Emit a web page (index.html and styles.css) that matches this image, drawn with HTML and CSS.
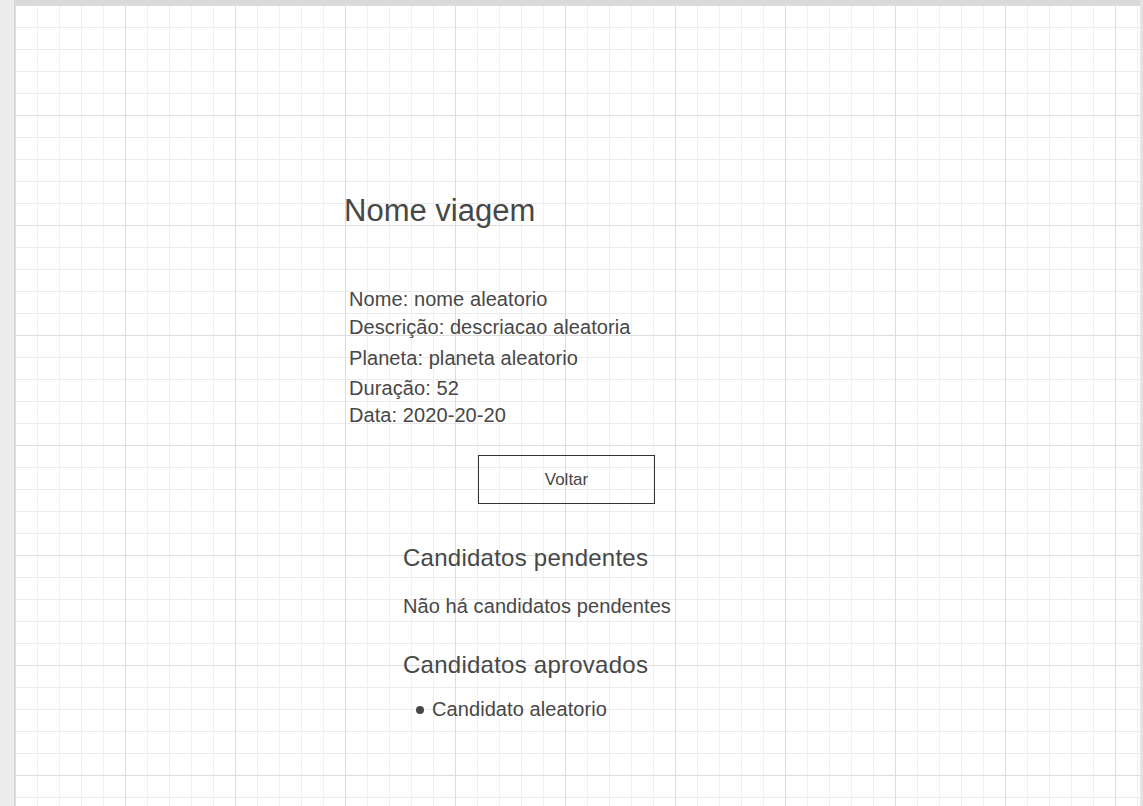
FILE: index.html
```html
<!DOCTYPE html>
<html lang="pt">
<head>
<meta charset="utf-8">
<title>Nome viagem</title>
<link rel="stylesheet" href="styles.css">
</head>
<body>
<div class="app">
  <div class="sidebar"></div>
  <div class="main">
    <div class="topbar"></div>
    <div class="canvas">
      <div class="page">
        <h1 class="title">Nome viagem</h1>
        <div class="details">
          <p class="detail">Nome: nome aleatorio</p>
          <p class="detail d2">Descrição: descriacao aleatoria</p>
          <p class="detail d3">Planeta: planeta aleatorio</p>
          <p class="detail d4">Duração: 52</p>
          <p class="detail d5">Data: 2020-20-20</p>
        </div>
        <button class="btn" type="button">Voltar</button>
        <section class="candidates">
          <h2 class="section-title">Candidatos pendentes</h2>
          <p class="empty">Não há candidatos pendentes</p>
          <h2 class="section-title approved">Candidatos aprovados</h2>
          <ul class="list">
            <li class="list-item">Candidato aleatorio</li>
          </ul>
        </section>
      </div>
    </div>
  </div>
  <div class="rightbar"></div>
</div>
</body>
</html>
```
FILE: styles.css
```css
* { box-sizing: border-box; }
html, body { margin: 0; padding: 0; }
body {
  width: 1143px;
  height: 806px;
  overflow: hidden;
  font-family: "Liberation Sans", Arial, sans-serif;
  color: #474747;
  background: #ffffff;
}
.app {
  display: flex;
  width: 1143px;
  height: 806px;
}
.sidebar {
  width: 15px;
  flex: none;
  background: #ececec;
  border-right: 1px solid #d6d6d6;
}
.main {
  flex: 1;
  display: flex;
  flex-direction: column;
  min-width: 0;
}
.topbar {
  height: 5px;
  flex: none;
  background: #dadada;
}
.canvas {
  flex: 1;
  background-color: #ffffff;
  background-image:
    linear-gradient(to right, #dddddd 1px, transparent 1px),
    linear-gradient(to bottom, #dddddd 1px, transparent 1px),
    linear-gradient(to right, #f0f0f0 1px, transparent 1px),
    linear-gradient(to bottom, #ebebeb 1px, transparent 1px);
  background-size: 110px 110px, 110px 110px, 22px 22px, 22px 22px;
  background-position: 0 0;
}
.rightbar {
  width: 3px;
  flex: none;
  background: #e4e4e4;
}
.page {
  padding-top: 190px;
  padding-left: 329px;
  display: flex;
  flex-direction: column;
  align-items: flex-start;
}
.title {
  margin: 0;
  font-size: 31px;
  line-height: 31px;
  font-weight: normal;
}
.details {
  margin-top: 63px;
  margin-left: 5px;
}
.detail {
  margin: 0;
  font-size: 20px;
  line-height: 20px;
  letter-spacing: 0.08px;
}
.d2 { margin-top: 8px; }
.d3 { margin-top: 11px; }
.d4 { margin-top: 10px; }
.d5 { margin-top: 7px; }
.btn {
  margin-top: 30px;
  margin-left: 134px;
  width: 177px;
  height: 49px;
  border: 1px solid #333333;
  background: transparent;
  font-family: "Liberation Sans", Arial, sans-serif;
  font-size: 17px;
  color: #474747;
  padding: 0;
}
.candidates {
  margin-left: 59px;
  margin-top: 42px;
}
.section-title {
  margin: 0;
  font-size: 24px;
  line-height: 24px;
  font-weight: normal;
  letter-spacing: 0.25px;
}
.empty {
  margin: 26px 0 0;
  font-size: 20px;
  line-height: 20px;
  letter-spacing: 0.08px;
}
.approved { margin-top: 37px; }
.list {
  list-style: none;
  margin: 22px 0 0;
  padding: 0 0 0 13px;
}
.list-item {
  font-size: 20px;
  line-height: 20px;
  display: flex;
  align-items: center;
  gap: 8px;
  letter-spacing: 0.08px;
}
.list-item::before {
  content: "";
  width: 8px;
  height: 8px;
  border-radius: 50%;
  background: #474747;
  margin-top: 2px;
}
```
